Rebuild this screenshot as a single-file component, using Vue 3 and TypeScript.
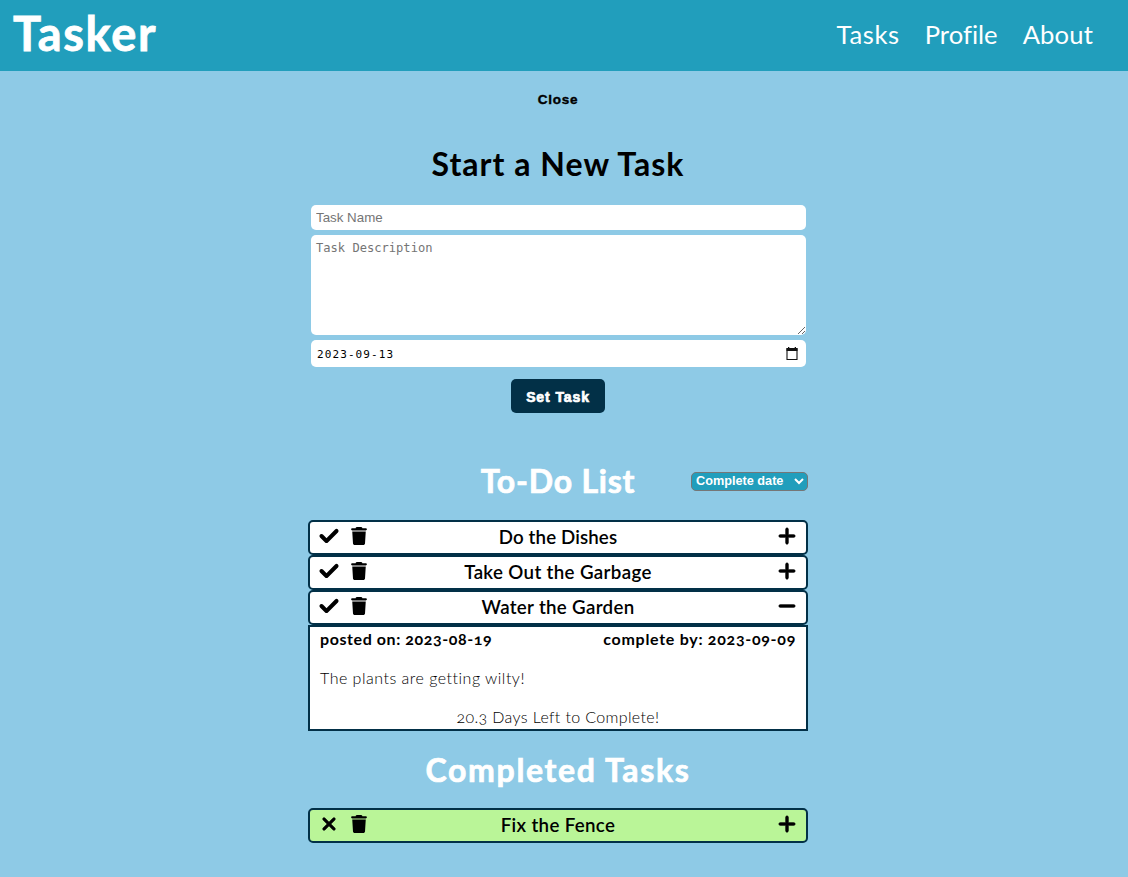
<script setup lang="ts">
import { ref } from 'vue'

interface Task { id: number; title: string; open: boolean; cls: string }

const links = [
  { label: 'Tasks', cls: 'link-tasks' },
  { label: 'Profile', cls: 'link-profile' },
  { label: 'About', cls: 'link-about' },
]
const tasks = ref<Task[]>([
  { id: 1, title: 'Do the Dishes', open: false, cls: 'dishes' },
  { id: 2, title: 'Take Out the Garbage', open: false, cls: 'garbage' },
  { id: 3, title: 'Water the Garden', open: true, cls: 'garden' },
])
const dueDate = ref('2023-09-13')

const CHECK = 'M438.6 105.4c12.5 12.5 12.5 32.8 0 45.3l-256 256c-12.5 12.5-32.8 12.5-45.3 0l-128-128c-12.5-12.5-12.5-32.8 0-45.3s32.8-12.5 45.3 0L160 338.7 393.4 105.4c12.5-12.5 32.8-12.5 45.3 0z'
const TRASH = 'M135.2 17.7L128 32H32C14.3 32 0 46.3 0 64S14.3 96 32 96H416c17.7 0 32-14.3 32-32s-14.3-32-32-32H320l-7.2-14.3C307.4 6.8 296.3 0 284.2 0H163.8c-12.1 0-23.2 6.8-28.6 17.7zM416 128H32L53.2 467c1.6 25.3 22.6 45 47.9 45H346.9c25.3 0 46.3-19.7 47.9-45L416 128z'
const PLUS = 'M256 80c0-17.7-14.3-32-32-32s-32 14.3-32 32V224H48c-17.7 0-32 14.3-32 32s14.3 32 32 32H192V432c0 17.7 14.3 32 32 32s32-14.3 32-32V288H400c17.7 0 32-14.3 32-32s-14.3-32-32-32H256V80z'
const MINUS = 'M432 256c0 17.7-14.3 32-32 32H48c-17.7 0-32-14.3-32-32s14.3-32 32-32H400c17.7 0 32 14.3 32 32z'
const XMARK = 'M374.6 150.6c12.5-12.5 12.5-32.8 0-45.3s-32.8-12.5-45.3 0L224 210.7 118.6 105.4c-12.5-12.5-32.8-12.5-45.3 0s-12.5 32.8 0 45.3L178.7 256 73.4 361.4c-12.5 12.5-12.5 32.8 0 45.3s32.8 12.5 45.3 0L224 301.3 329.4 406.6c12.5 12.5 32.8 12.5 45.3 0s12.5-32.8 0-45.3L269.3 256 374.6 150.6z'
</script>

<template>
  <div class="page">
    <header class="bar">
      <h1 class="logo">Tasker</h1>
      <nav class="nav">
        <a v-for="l in links" :key="l.label" :class="l.cls">{{ l.label }}</a>
      </nav>
    </header>
    <main class="main">
      <button class="close">Close</button>
      <h2 class="title dark">Start a New Task</h2>
      <form class="form" @submit.prevent>
        <input class="field name" placeholder="Task Name" />
        <textarea class="field desc" placeholder="Task Description"></textarea>
        <div class="field date">
          <span>{{ dueDate }}</span>
          <svg class="cal" viewBox="0 0 12 13"><path d="M1 1.5h10v11H1z" fill="none" stroke="#111" stroke-width="1.1" /><path d="M.5 1.2h11V4H.5zM2 0h1.3v2H2zM8.7 0H10v2H8.7z" fill="#111" /></svg>
        </div>
        <button class="submit">Set Task</button>
      </form>
      <div class="list-head">
        <h2 class="title todo">To-Do List</h2>
        <select class="sort"><option>Complete date</option></select>
      </div>
      <section class="list">
        <template v-for="task in tasks" :key="task.id">
          <div class="row">
            <div class="actions">
              <svg class="icon check" viewBox="0 0 448 512"><path :d="CHECK" /></svg>
              <svg class="trash" viewBox="0 0 448 512"><path :d="TRASH" /></svg>
            </div>
            <h3 :class="['name-text', task.cls]">{{ task.title }}</h3>
            <svg class="icon toggle" viewBox="0 0 448 512"><path :d="task.open ? MINUS : PLUS" /></svg>
          </div>
          <div v-if="task.open" class="details">
            <div class="dates">
              <span class="posted">posted on: 2023-08-19</span>
              <span class="due">complete by: 2023-09-09</span>
            </div>
            <p class="body">The plants are getting wilty!</p>
            <p class="left">20.3 Days Left to Complete!</p>
          </div>
        </template>
      </section>
      <h2 class="title done-title">Completed Tasks</h2>
      <section class="list">
        <div class="row done">
          <div class="actions">
            <svg class="icon" viewBox="0 0 448 512"><path :d="XMARK" /></svg>
            <svg class="trash" viewBox="0 0 448 512"><path :d="TRASH" /></svg>
          </div>
          <h3 class="name-text fence">Fix the Fence</h3>
          <svg class="icon toggle" viewBox="0 0 448 512"><path :d="PLUS" /></svg>
        </div>
      </section>
    </main>
  </div>
</template>

<style>
body { background: #8ecae6; }
</style>

<style scoped>
.page { min-height: 877px; background: #8ecae6; font-family: Lato, "Open Sans", sans-serif; color: #000; }
h1, h2, h3, p { margin: 0; }
.bar { height: 71px; box-sizing: border-box; padding: 0 35px 5px 13px; background: #219ebc; color: #fff; display: flex; align-items: center; justify-content: space-between; }
.logo { font-size: 47px; font-weight: 700; line-height: 60px; letter-spacing: 1.7px; -webkit-text-stroke: .8px #fff; }
.nav { display: flex; gap: 25px; font-size: 25.6px; line-height: 32px; padding-top: 1px; }
.link-tasks { letter-spacing: .6px; }
.link-profile { letter-spacing: .02px; }
.link-about { letter-spacing: .15px; }
.main { display: flex; flex-direction: column; align-items: center; padding-right: 12px; }
.close { margin-top: 20px; height: 17px; padding: 0; border: 0; background: none; color: #000; font: 700 13.5px/17px "Liberation Sans", sans-serif; letter-spacing: .7px; -webkit-text-stroke: .4px #000; }
.title { font-size: 32px; line-height: 38px; font-weight: 700; color: #fff; white-space: nowrap; }
.dark { margin-top: 37px; color: #000; letter-spacing: 1.02px; }
.form { width: 495px; margin: 22px 0 0 1px; display: flex; flex-direction: column; align-items: center; gap: 5px; }
.field { box-sizing: border-box; width: 495px; border: 0; border-radius: 5px; background: #fff; padding: 5px; outline: 0; }
.name { height: 25px; font: 13.33px "Liberation Sans", sans-serif; }
.desc { height: 100px; padding-top: 5px; font: 12.1px/16px "DejaVu Sans Mono", monospace; }
.date { height: 27px; display: flex; align-items: center; justify-content: space-between; padding: 2px 8px 0 6px; font: 11px/16px "DejaVu Sans Mono", monospace; letter-spacing: 1.1px; }
.cal { width: 12px; height: 13px; margin-bottom: 2px; }
.submit { margin: 7px 1px 0 0; width: 94px; height: 34px; padding: 1px 0 0; border: 0; border-radius: 5px; background: #023047; color: #fff; font: 700 14px "Liberation Sans", sans-serif; letter-spacing: .9px; -webkit-text-stroke: .7px #fff; }
.list-head { width: 500px; height: 38px; margin-top: 49px; display: grid; grid-template-columns: 1fr auto 1fr; align-items: center; }
.todo { grid-column: 2; letter-spacing: .8px; -webkit-text-stroke: .7px #fff; }
.sort { justify-self: end; width: 117px; height: 19px; border: 1px solid #767676; border-radius: 5px; background: #219ebc; color: #fff; font: 700 12.7px "Liberation Sans", sans-serif; padding: 0; }
.list { width: 500px; }
.list-head + .list { margin-top: 20px; }
.row { box-sizing: border-box; height: 35px; border: 2px solid #023047; border-radius: 5px; background: #fff; display: grid; grid-template-columns: 60px 1fr 60px; padding: 0 10px; }
.done { background: #baf598; }
.actions { display: flex; gap: 13px; padding-top: 4px; }
.icon { width: 18px; height: 20px; overflow: visible; stroke: #000; stroke-width: 20px; stroke-linejoin: round; }
.check { stroke-width: 40px; }
.trash { width: 16px; height: 18px; margin-top: 1px; }
.toggle { justify-self: end; margin-top: 4px; }
.name-text { font-size: 18.72px; font-weight: 600; line-height: 30px; text-align: center; white-space: nowrap; }
.dishes { letter-spacing: .12px; }
.garbage { letter-spacing: .35px; }
.garden { letter-spacing: .32px; }
.fence { letter-spacing: .33px; }
.details { box-sizing: border-box; height: 106px; border: 2px solid #023047; background: #fff; padding: 2px 10px 0; font-size: 16px; line-height: 19px; display: flex; flex-direction: column; gap: 20px; font-variant-numeric: oldstyle-nums; }
.dates { display: flex; justify-content: space-between; font-weight: 700; }
.posted { letter-spacing: .58px; }
.due { letter-spacing: .71px; }
.body, .left { font-weight: 300; }
.body { letter-spacing: .5px; }
.left { text-align: center; letter-spacing: .36px; }
.done-title { margin-top: 20px; margin-bottom: 19px; letter-spacing: 1.65px; -webkit-text-stroke: .7px #fff; }
</style>
